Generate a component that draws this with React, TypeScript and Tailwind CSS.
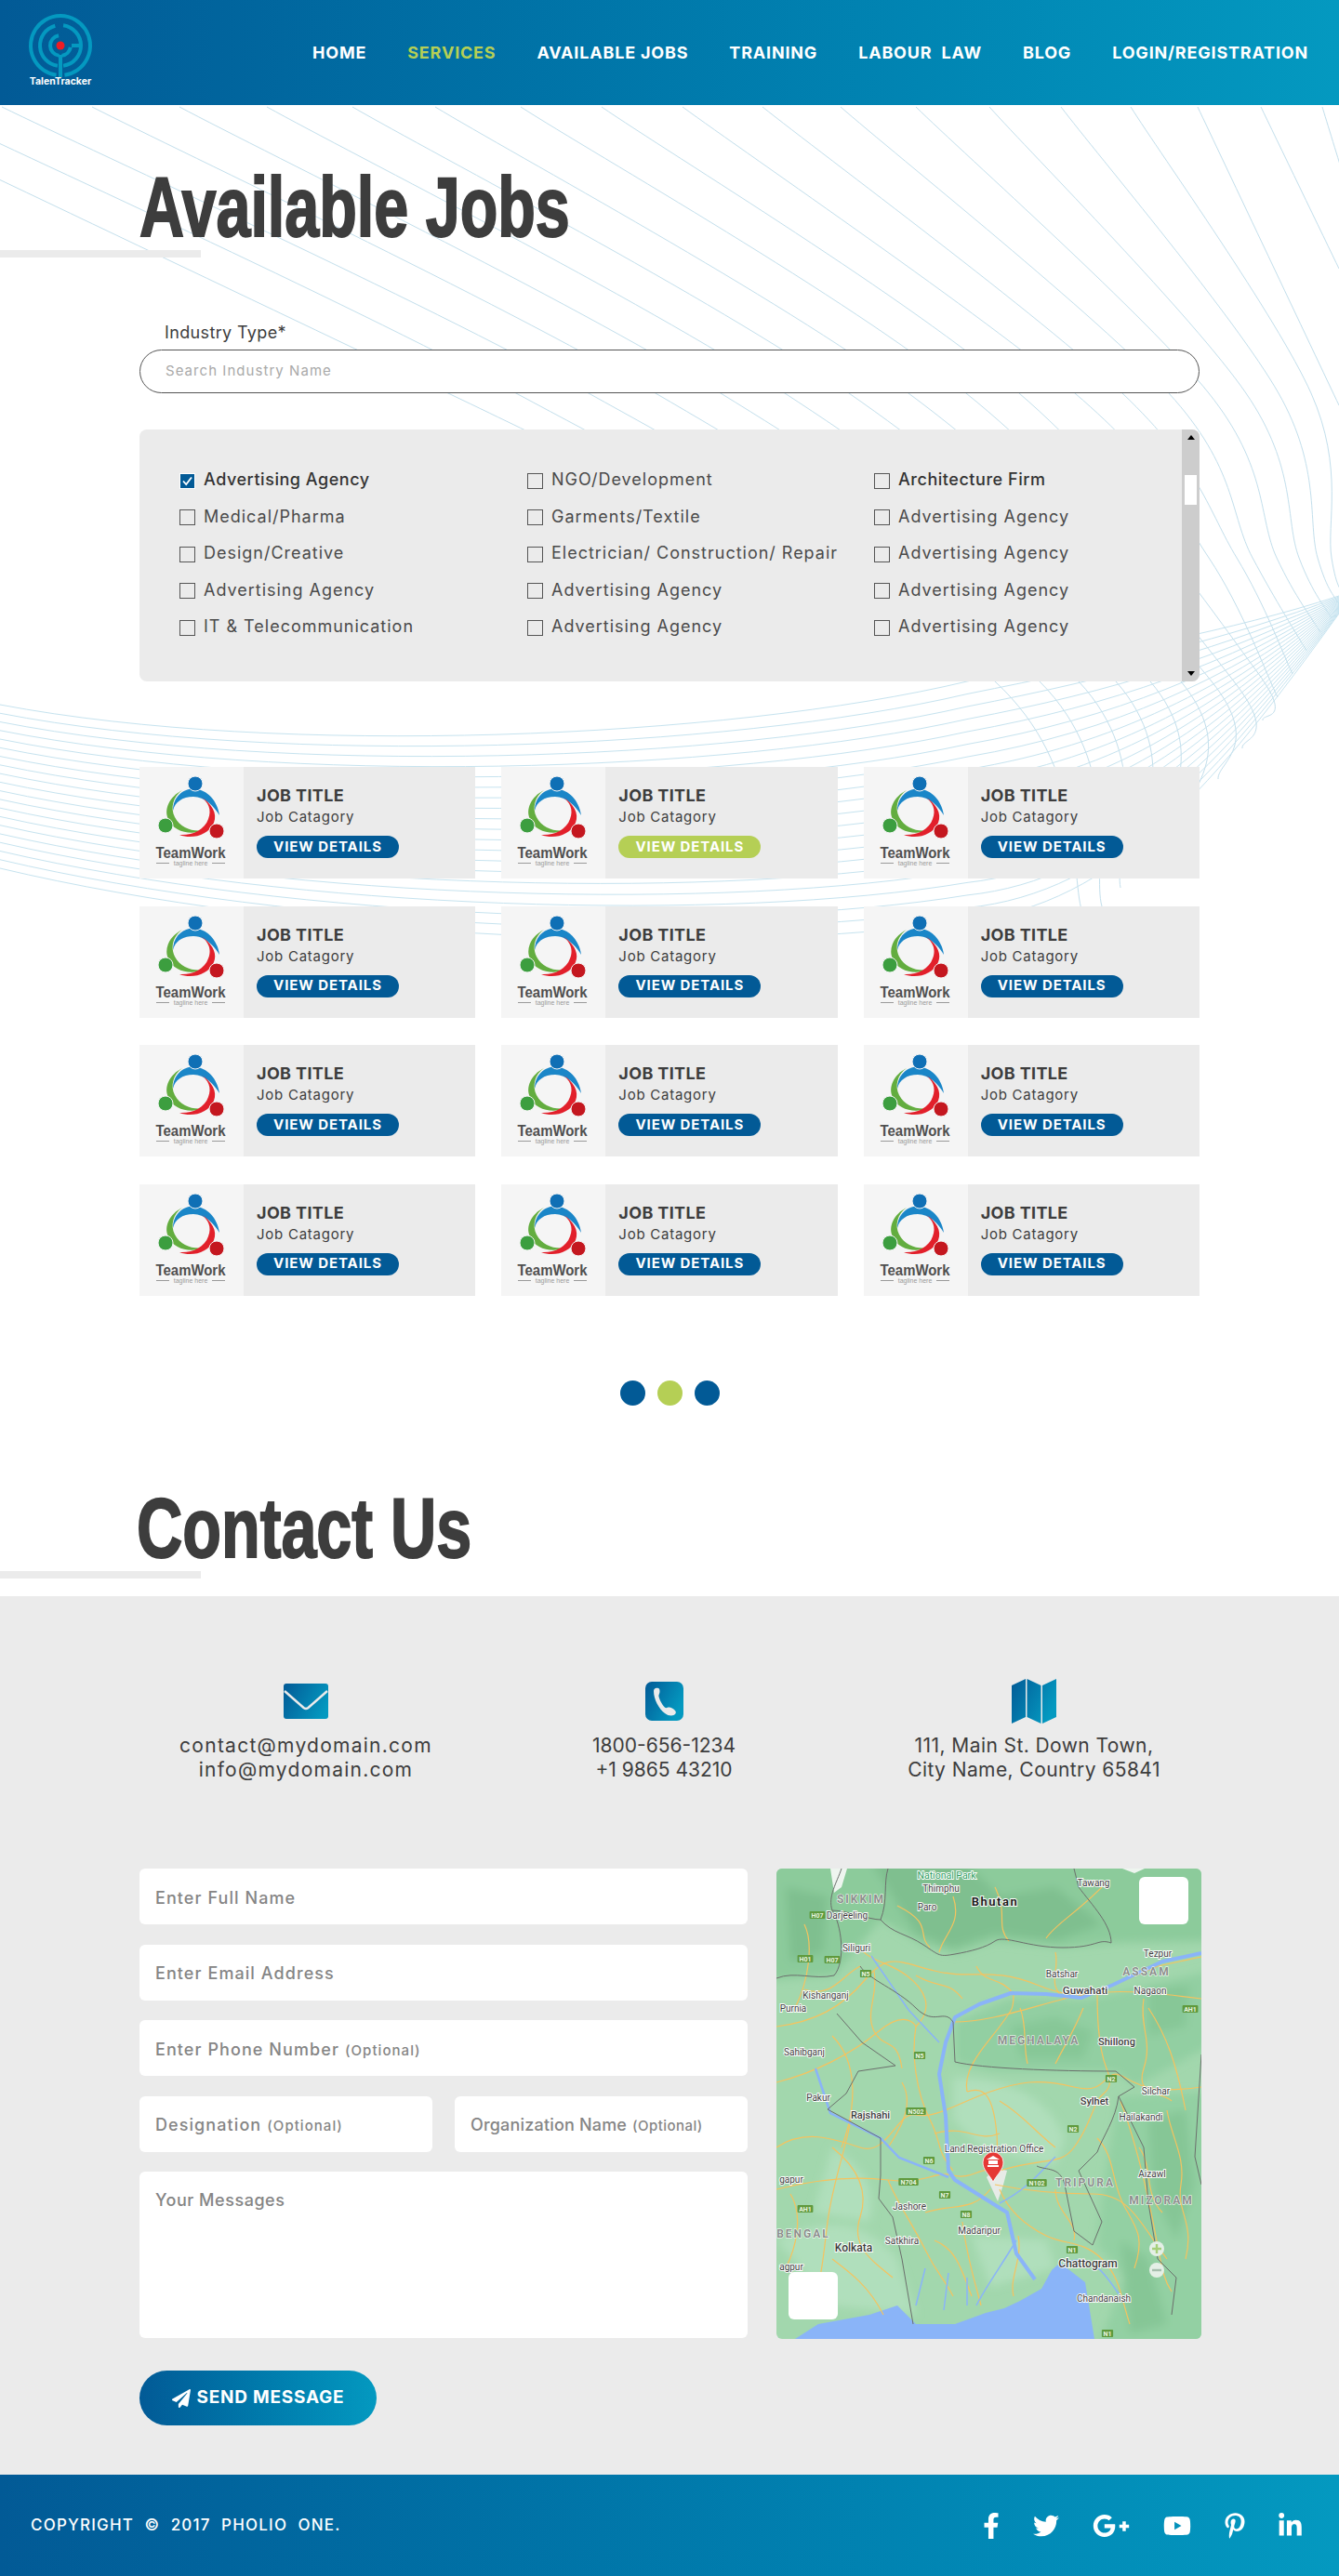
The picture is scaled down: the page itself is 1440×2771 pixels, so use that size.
import { FaFacebookF, FaTwitter, FaGooglePlusG, FaYoutube, FaPinterestP, FaLinkedinIn, FaPaperPlane } from "react-icons/fa";

const navLinks = ["HOME", "SERVICES", "AVAILABLE JOBS", "TRAINING", "LABOUR  LAW", "BLOG", "LOGIN/REGISTRATION"];

const industries = [
  ["Advertising Agency", "Medical/Pharma", "Design/Creative", "Advertising Agency", "IT & Telecommunication"],
  ["NGO/Development", "Garments/Textile", "Electrician/ Construction/ Repair", "Advertising Agency", "Advertising Agency"],
  ["Architecture Firm", "Advertising Agency", "Advertising Agency", "Advertising Agency", "Advertising Agency"],
];

const jobs = Array.from({ length: 12 }, (_, i) => i);

// background mesh, each line as waypoints read off the picture
const fanLines: number[][][] = [
  [[-165, 115], [482, 423], [640, 500]],
  [[-84, 115], [555, 423], [1070, 733], [1165, 985]],
  [[2, 115], [633, 423], [1118, 733], [1185, 975]],
  [[99, 115], [705, 423], [1160, 733], [1205, 955]],
  [[193, 115], [775, 423], [1200, 733], [1225, 930]],
  [[287, 115], [844, 423], [1237, 733], [1250, 900]],
  [[379, 115], [913, 423], [1270, 733], [1280, 870]],
  [[468, 115], [977, 423], [1303, 733], [1310, 838]],
  [[560, 115], [1039, 423], [1327, 733], [1336, 805]],
  [[647, 115], [1096, 423], [1350, 720], [1358, 775]],
  [[734, 115], [1156, 423], [1300, 600], [1374, 750]],
  [[820, 115], [1207, 423], [1330, 600], [1390, 725]],
  [[904, 115], [1257, 423], [1347, 600], [1405, 700]],
  [[985, 115], [1300, 423], [1373, 600], [1420, 680]],
  [[1064, 115], [1340, 423], [1397, 600], [1432, 665]],
  [[1141, 115], [1375, 423], [1417, 600], [1440, 650]],
  [[1216, 115], [1410, 423], [1432, 600], [1445, 640]],
  [[1288, 115], [1440, 436]],
  [[1356, 115], [1440, 289]],
  [[1422, 115], [1445, 190]],
];

function smoothPath(pts: number[][]) {
  let d = `M${pts[0][0]} ${pts[0][1]}`;
  for (let i = 0; i < pts.length - 1; i++) {
    const a = pts[Math.max(i - 1, 0)];
    const b = pts[i];
    const c = pts[i + 1];
    const e = pts[Math.min(i + 2, pts.length - 1)];
    d += ` C${b[0] + (c[0] - a[0]) / 6} ${b[1] + (c[1] - a[1]) / 6} ${c[0] - (e[0] - b[0]) / 6} ${c[1] - (e[1] - b[1]) / 6} ${c[0]} ${c[1]}`;
  }
  return d;
}

const waveTop = [758, 300, 815, 780, 795, 1040, 733, 1200, 700, 1320, 680, 1440, 641];
const waveBottom = [934, 320, 1010, 780, 1030, 1040, 990, 1200, 975, 1310, 840, 1440, 660];

function wavePath(t: number) {
  const v = waveTop.map((a, i) => a + (waveBottom[i] - a) * t);
  return `M0 ${v[0]} C${v[1]} ${v[2]} ${v[3]} ${v[4]} ${v[5]} ${v[6]} C${v[7]} ${v[8]} ${v[9]} ${v[10]} ${v[11]} ${v[12]}`;
}

function BackgroundMesh() {
  return (
    <svg className="absolute left-0 top-0 pointer-events-none" width="1440" height="1010" viewBox="0 113 1440 1010" fill="none">
      {fanLines.map((l, i) => (
        <path key={i} d={smoothPath(l)} stroke="#c3dfec" strokeWidth="1" />
      ))}
      {Array.from({ length: 20 }, (_, i) => (
        <path key={i} d={wavePath(i / 19)} stroke="#c6e3ef" strokeWidth="1" />
      ))}
    </svg>
  );
}

function arc(r: number, from: number, to: number) {
  const p = (a: number) => {
    const rad = ((a - 90) * Math.PI) / 180;
    return `${35 + r * Math.cos(rad)} ${35 + r * Math.sin(rad)}`;
  };
  return `M${p(from)} A${r} ${r} 0 ${to - from > 180 ? 1 : 0} 1 ${p(to)}`;
}

function Logo() {
  return (
    <div className="flex flex-col items-center w-[70px]">
      <svg width="70" height="70" viewBox="0 0 70 70" fill="none" stroke="#0499c0" strokeWidth="4">
        <path d={arc(32, 188, 532)} />
        <path d={arc(22, 8, 172)} />
        <path d={arc(22, 188, 345)} />
        <path d={arc(11, 100, 172)} />
        <path d={arc(11, 188, 350)} />
        <path d="M35 45 V69 M47 35 H56" />
        <circle cx="35" cy="35" r="4.5" fill="#ed1c24" stroke="none" />
      </svg>
      <span className="text-[10.5px] font-bold leading-none text-white -mt-[1px] whitespace-nowrap">TalenTracker</span>
    </div>
  );
}

function TeamLogo() {
  return (
    <div className="w-[112px] h-full bg-[#f5f5f5] shrink-0">
      <svg width="112" height="120" viewBox="0 0 112 120">
        <path d="M36 47 C36 30 50 22 60 24 C72 24 84 36 86 52 C80 42 70 32 58 32 C46 32 38 38 36 47 Z" fill="#1a86c8" />
        <path d="M46 25 C32 32 26 46 31 56 C36 70 56 74 69 68 C58 70 44 66 38 54 C33 44 36 32 46 25 Z" fill="#63ad3f" />
        <path d="M66 32 C78 40 84 50 80 60 C74 74 56 78 43 73 C56 74 70 68 74 56 C78 46 74 38 66 32 Z" fill="#e2202b" />
        <circle cx="60" cy="18" r="8" fill="#0f6fb5" stroke="#f5f5f5" strokeWidth="1" />
        <circle cx="28" cy="63" r="8" fill="#3c9e3f" stroke="#f5f5f5" strokeWidth="1" />
        <circle cx="83" cy="69" r="8" fill="#c4171f" stroke="#f5f5f5" strokeWidth="1" />
        <text x="55" y="98" textAnchor="middle" fontFamily="Liberation Sans" fontWeight="700" fontSize="16" fill="#4f4f4f" textLength="75" lengthAdjust="spacingAndGlyphs">TeamWork</text>
        <text x="55" y="106" textAnchor="middle" fontFamily="Liberation Sans" fontSize="7" fill="#9a9a9a">tagline here</text>
        <path d="M18 103.5 H32 M78 103.5 H92" stroke="#9a9a9a" strokeWidth="1" />
      </svg>
    </div>
  );
}

function JobCard({ active }: { active?: boolean }) {
  return (
    <div className="relative flex h-[120px] bg-[#ebebeb]">
      <TeamLogo />
      <div className="pl-[14px] pt-[20px]">
        <div className="text-[18px] leading-[22px] font-bold tracking-[0.02em] text-[#3d3d3d]">JOB TITLE</div>
        <div className="mt-[2px] text-[15px] leading-[20px] tracking-[0.05em] text-[#3d3d3d]">Job Catagory</div>
        <button className={`mt-[10px] flex items-center justify-center w-[153px] h-[24px] rounded-full text-white text-[15px] font-bold tracking-[0.06em] ${active ? "bg-[#b5cf55]" : "bg-[#025a96]"}`}>
          VIEW DETAILS
        </button>
      </div>
    </div>
  );
}

function Heading({ text, cls }: { text: string; cls: string }) {
  return (
    <>
      <div className="relative w-[1140px] mx-auto">
        <h1 className={`font-['Liberation_Sans',Arial,sans-serif] font-bold text-[91px] leading-[91px] text-[#3d3d3d] origin-left whitespace-nowrap [-webkit-text-stroke:2px_#3d3d3d] ${cls}`}>
          {text}
        </h1>
      </div>
      <div className="relative mt-[1px] w-[216px] h-2 bg-[#ebebeb]" />
    </>
  );
}

function Checkbox({ checked }: { checked?: boolean }) {
  return (
    <span className={`mt-[3px] flex items-center justify-center w-[17px] h-[17px] shrink-0 border ${checked ? "bg-[#025a96] border-white" : "border-[#555]"}`}>
      {checked && (
        <svg width="11" height="11" viewBox="0 0 11 11" fill="none" stroke="#fff" strokeWidth="1.8">
          <path d="M1 5.5 L4.2 9 L10 1.5" />
        </svg>
      )}
    </span>
  );
}

function IndustryPanel() {
  return (
    <div className="mt-[39px] flex h-[271px] rounded-lg overflow-hidden bg-[#ebebeb] relative">
      <div className="flex-1 grid grid-cols-[374px_373px_1fr] pl-[43px] pt-[34px]">
        {industries.map((col, c) => (
          <div key={c}>
            {col.map((name, r) => {
              const strong = r === 0 && c !== 1;
              return (
                <div key={r} className="flex items-center gap-[9px] h-[39.5px] whitespace-nowrap">
                  <Checkbox checked={c === 0 && r === 0} />
                  <span className={`text-[18px] ${strong ? "tracking-[0.03em] font-medium text-[#333]" : "tracking-[0.055em] text-[#4a4a4a]"}`}>{name}</span>
                </div>
              );
            })}
          </div>
        ))}
      </div>
      <div className="w-[19px] bg-[#cdcdcd] flex flex-col items-center pt-[6px] pb-[6px]">
        <span className="w-0 h-0 border-x-[4px] border-x-transparent border-b-[5px] border-b-black" />
        <span className="mt-[38px] w-[13px] h-[32px] bg-white" />
        <span className="mt-auto w-0 h-0 border-x-[4px] border-x-transparent border-t-[5px] border-t-black" />
      </div>
    </div>
  );
}

function IconGradient({ id, size }: { id: string; size: number }) {
  return (
    <defs>
      <linearGradient id={id} gradientUnits="userSpaceOnUse" x1="0" y1="0" x2={size} y2={size * 0.5}>
        <stop offset="0" stopColor="#025a96" />
        <stop offset="1" stopColor="#0499c0" />
      </linearGradient>
    </defs>
  );
}

function MailIcon() {
  return (
    <svg width="48" height="38" viewBox="0 0 48 38">
      <IconGradient id="mailGrad" size={48} />
      <rect width="48" height="38" rx="3" fill="url(#mailGrad)" />
      <path d="M1 8 L21.5 26 Q24 28 26.5 26 L47 8" fill="none" stroke="#ebebeb" strokeWidth="2.4" />
    </svg>
  );
}

function PhoneIcon() {
  return (
    <svg width="41" height="42" viewBox="0 0 41 42">
      <IconGradient id="phoneGrad" size={41} />
      <rect width="41" height="42" rx="7" fill="url(#phoneGrad)" />
      <path d="M9 10 C9 7.5 11 6 14 7 C15.5 7.5 15.5 9 15.5 11 C15.5 13 14 14 14.5 16 C15.5 20 18.5 25.5 21.5 28 C23 28.5 24 27.5 25.5 27.5 C27.5 27.5 30 29 32 31 C33.5 32.5 33 35 30.5 36 C28 37 24 36.5 21 34 C14.5 29 9 19 9 10 Z" fill="#ebebeb" />
    </svg>
  );
}

function MapIcon() {
  return (
    <svg width="48" height="48" viewBox="0 0 48 48">
      <IconGradient id="foldGrad" size={48} />
      <path d="M0 7 L15 0 V41 L0 48 Z M16.5 0 L31.5 7 V48 L16.5 41 Z M33 7 L48 0 V41 L33 48 Z" fill="url(#foldGrad)" />
    </svg>
  );
}

function ContactInfo() {
  const cols = [
    { icon: <MailIcon />, lines: ["contact@mydomain.com", "info@mydomain.com"], cls: "", text: "tracking-[0.06em]" },
    { icon: <PhoneIcon />, lines: ["1800-656-1234", "+1 9865 43210"], cls: "", text: "" },
    { icon: <MapIcon />, lines: ["111, Main St. Down Town,", "City Name, Country 65841"], cls: "pl-[14px]", text: "tracking-[0.02em]" },
  ];
  return (
    <div className="grid grid-cols-[358px_412px_370px]">
      {cols.map((c, i) => (
        <div key={i} className={`flex flex-col items-center ${c.cls}`}>
          <div className="h-[48px] flex items-center justify-center">{c.icon}</div>
          <div className={`mt-[11px] text-[21px] leading-[26px] text-[#3d3d3d] text-center whitespace-nowrap ${c.text}`}>
            {c.lines.map((l) => (
              <div key={l}>{l}</div>
            ))}
          </div>
        </div>
      ))}
    </div>
  );
}

function Field({ label, optional }: { label: string; optional?: boolean }) {
  return (
    <div className="flex items-center h-[60px] px-[17px] bg-white rounded-md whitespace-nowrap text-[#858585] text-[18px] font-medium tracking-[0.06em]">
      <span className="pt-[2px]">
        {label}
        {optional && <span className="ml-[6px] text-[15px] tracking-[0.07em]">(Optional)</span>}
      </span>
    </div>
  );
}

function ContactForm() {
  return (
    <div className="w-[654px] shrink-0">
      <div className="flex flex-col gap-[21.5px]">
        <Field label="Enter Full Name" />
        <Field label="Enter Email Address" />
        <Field label="Enter Phone Number" optional />
        <div className="grid grid-cols-2 gap-[24px]">
          <Field label="Designation" optional />
          <div className="[&>div]:tracking-[0.01em] [&_span_span]:tracking-[0.03em]">
            <Field label="Organization Name" optional />
          </div>
        </div>
        <div className="h-[179px] px-[17px] pt-[19px] bg-white rounded-md text-[#858585] text-[18px] font-medium leading-[24px] tracking-[0.03em]">Your Messages</div>
      </div>
      <button className="mt-[35px] flex items-center justify-center gap-[7px] w-[255px] h-[59px] rounded-full bg-linear-to-r from-[#025a96] to-[#0499c0] text-white text-[19px] font-bold tracking-[0.04em]">
        <FaPaperPlane className="w-[20px] h-[20px]" />
        SEND MESSAGE
      </button>
    </div>
  );
}

const cityLabels: [string, number, number, number?][] = [
  ["Thimphu", 177, 25], ["Paro", 162, 45], ["Darjeeling", 76, 54], ["Tawang", 341, 19], ["Siliguri", 86, 89],
  ["Tezpur", 410, 95], ["Batshar", 307, 117], ["Guwahati", 332, 135, 11.5], ["Nagaon", 402, 135], ["Kishanganj", 53, 140],
  ["Purnia", 18, 154], ["Shillong", 366, 190, 11], ["Sahibganj", 30, 201], ["Silchar", 408, 243], ["Sylhet", 342, 254, 11],
  ["Hailakandi", 392, 271], ["Pakur", 45, 250], ["Rajshahi", 101, 269, 11], ["Land Registration Office", 234, 305],
  ["Aizawl", 404, 332], ["Jashore", 143, 367], ["Madaripur", 218, 393], ["Satkhira", 135, 404], ["Kolkata", 83, 412, 12],
  ["Chattogram", 335, 429, 12], ["Chandanaish", 352, 466], ["gapur", 16, 338], ["agpur", 16, 432],
];

const stateLabels: [string, number, number][] = [
  ["SIKKIM", 91, 37], ["ASSAM", 398, 115], ["MEGHALAYA", 282, 189], ["TRIPURA", 332, 342], ["MIZORAM", 414, 361], ["BENGAL", 29, 397],
];

const shields: [string, number, number][] = [
  ["H07", 44, 50], ["H01", 31, 97], ["H07", 60, 98], ["N5", 96, 113], ["N5", 154, 201], ["AH1", 445, 151], ["N2", 360, 226],
  ["N502", 150, 261], ["N2", 319, 280], ["N6", 164, 314], ["N704", 142, 337], ["N102", 280, 338], ["N7", 181, 351],
  ["AH1", 31, 366], ["N8", 204, 372], ["N1", 318, 410], ["N1", 356, 500],
];

const roads = [
  "M0 170 C40 165 70 150 95 120 S130 100 170 110 S230 105 280 125 S340 135 410 105 L457 95",
  "M90 85 C100 100 120 100 140 115 S170 150 150 170 C145 200 150 240 165 270 S170 300 190 325",
  "M0 230 C40 220 80 200 110 175 S150 170 150 170",
  "M0 300 C30 280 60 290 90 300 S130 260 150 265 S200 250 230 240 S280 225 320 235 S350 210 375 225 S420 240 457 235",
  "M190 165 C230 165 270 150 310 140 S380 130 457 140",
  "M205 240 C200 215 225 190 240 170 S255 150 255 135",
  "M270 210 C265 190 270 170 262 150",
  "M345 130 C345 150 345 190 355 215 S350 240 345 250 S335 280 320 300 S290 310 240 325",
  "M0 345 C40 335 80 330 120 335 S170 325 190 330 S220 320 235 325",
  "M80 270 C75 300 60 340 55 380 S50 430 40 470",
  "M120 335 C130 360 145 380 160 410 S180 440 190 460",
  "M235 340 C260 345 300 350 340 350 S390 380 420 420",
  "M240 345 C250 370 270 385 290 395 S330 400 350 420 S370 460 380 490",
  "M370 250 C385 290 395 330 405 380 S415 440 425 455",
  "M205 240 C220 235 230 240 235 270 S235 300 240 320",
  "M160 370 C190 360 210 370 230 345",
  "M200 380 C205 420 215 450 220 470",
  "M350 20 C320 50 300 60 290 75 M235 20 C250 50 235 60 250 78 M130 40 C170 60 150 70 165 85 M190 30 C200 60 180 70 175 90",
  "M30 60 C40 80 35 120 20 150 M60 180 C90 210 85 260 70 300 M400 150 C420 180 430 210 440 260",
  "M105 110 C110 135 95 155 105 175 S130 180 135 215 M30 130 C60 140 70 115 90 105",
  "M215 105 C225 125 240 115 255 135 M150 115 C175 130 185 120 200 140 M300 90 C305 110 290 125 310 140",
  "M395 140 C390 170 405 185 395 215 S415 240 425 250 M330 150 C320 175 310 190 300 210",
  "M60 300 C85 320 100 345 90 375 S100 420 125 440 M15 350 C30 375 20 410 10 430",
  "M135 230 C150 255 130 285 120 300 M170 285 C205 275 215 295 240 285 M240 250 C265 265 275 280 300 300",
  "M300 345 C300 370 325 380 320 400 M345 290 C365 310 360 340 375 365 S395 400 385 430",
  "M420 260 C425 290 440 310 435 340 S450 380 440 420 M390 300 C405 320 395 350 415 370",
  "M260 395 C265 420 250 440 255 460 M170 400 C195 410 200 435 210 460 M60 420 C80 435 100 450 115 480",
];

function MapView() {
  return (
    <div className="relative w-[457px] h-[506px] shrink-0 rounded-md overflow-hidden">
      <svg className="block" width="457" height="506" viewBox="0 0 457 506" fontFamily="Roboto, sans-serif">
        <defs>
          <filter id="terrainBlur" x="-5%" y="-5%" width="110%" height="110%">
            <feGaussianBlur stdDeviation="5" />
          </filter>
        </defs>
        <rect width="457" height="506" fill="#a2d7ad" />
        <g filter="url(#terrainBlur)">
          <path d="M-10 -10 H467 V78 L360 80 L308 85 L235 78 L192 92 L158 82 L112 55 L62 115 L-10 120 Z" fill="#8ccb9b" />
          <path d="M100 -10 L200 -10 L240 30 L300 20 L350 60 L300 78 L235 70 L190 85 L150 70 Z M10 20 L55 30 L50 90 L15 100 Z" fill="#7fbf8f" />
          <path d="M192 165 L252 140 L330 142 L467 110 V190 L385 235 L365 218 L232 218 L192 208 Z" fill="#92cfa2" />
          <path d="M250 170 L300 160 L340 175 L330 205 L265 205 Z M400 130 L445 125 L440 170 L400 180 Z" fill="#87c797" />
          <path d="M368 245 L467 240 V516 L345 516 L375 440 L345 405 L350 350 Z" fill="#93d0a3" />
          <path d="M400 270 L440 260 L450 340 L430 400 L405 350 Z M370 400 L400 420 L420 490 L380 500 Z" fill="#86c696" />
          <path d="M0 400 C40 380 90 370 130 420 L150 480 L60 470 Z" fill="#b0dfbc" />
          <path d="M190 225 C240 225 290 240 310 290 L300 320 L220 300 L190 270 Z M60 300 C90 320 110 340 100 380 L40 370 Z M210 395 L290 400 L300 430 L230 450 Z" fill="#b0dfbc" />
        </g>
        <path d="M58 0 L76 0 L70 20 L62 26 Z M372 0 H396 L385 5 Z" fill="#eef5ef" />
        <path d="M20 506 L45 490 L100 480 L130 470 L150 490 L192 490 L225 478 L245 473 L262 465 L285 452 L296 432 L305 424 L332 445 L342 506 Z" fill="#8ab4f8" />
        <path d="M226 332 L238 358 L244 340 L248 325 L236 322 Z" fill="#e7ebe7" />
        <g fill="none" stroke="#f5c35f" strokeWidth="1.2">
          {roads.map((d, i) => (
            <path key={i} d={d} />
          ))}
        </g>
        <g fill="none" stroke="#8ab4f8">
          <path strokeWidth="4" strokeLinejoin="round" d="M457 91 L415 100 L362 125 L328 139 L290 135 L252 134 L218 146 L192 160 L182 187 L175 221 L182 266 L185 325 L192 335 L248 370 L258 414 L278 442" />
          <path strokeWidth="2.5" d="M42 215 L58 263 L112 290 L132 311 L185 332" />
          <path strokeWidth="1.5" d="M102 94 L142 152 L175 187" />
          <path strokeWidth="1.5" d="M258 400 C240 430 225 450 215 470 M240 360 C270 345 285 325 300 310 M310 425 C340 410 355 440 370 460 M150 470 L160 430 M180 475 L185 435 M205 470 L205 440" />
        </g>
        <g fill="none" stroke="#6b6f6c" strokeWidth="1">
          <path d="M112 55 C125 70 140 70 158 82 S175 95 192 92 S225 85 235 78 S270 85 308 85 S345 75 360 80 C360 60 340 40 325 20 L320 0" />
          <path d="M62 115 C75 100 70 60 60 45 M0 118 C20 110 40 120 62 115" />
          <path d="M70 0 C65 15 55 30 60 45 C75 45 100 55 112 55 C120 35 115 15 120 0" />
          <path d="M90 105 C100 120 130 130 150 150 S180 150 190 165 L192 208 C220 215 300 218 365 218 L385 235 L368 245 C365 270 350 290 345 305 L325 325 L350 380 L340 405 L320 390 L310 340 C305 320 290 325 280 320" />
          <path d="M65 156 L92 187 L128 212 L88 218 L75 242 L55 259 L112 290 L112 330 L110 355 L125 375 L135 420 L147 490" />
          <path d="M368 245 L395 300 L400 360 L410 420 L430 440 L425 480 M457 200 L450 310 L457 340" />
        </g>
        {shields.map(([t, x, y], i) => {
          const w = t.length * 4.6 + 3;
          return (
            <g key={i}>
              <rect x={x - w / 2} y={y - 4} width={w} height={8} rx="1" fill="#5f9a3d" />
              <text x={x} y={y + 2.6} textAnchor="middle" fontSize="7" fontWeight="700" fill="#e8f5e0">{t}</text>
            </g>
          );
        })}
        <g textAnchor="middle" stroke="#fff" strokeWidth="1.8" paintOrder="stroke" fill="#3d3d3d">
          {cityLabels.map(([t, x, y, s], i) => (
            <text key={i} x={x} y={y} fontSize={s ?? 10} fontWeight={s ? 500 : 400}>{t}</text>
          ))}
          <text x="183" y="11" fontSize="10.5" fill="#2f9e63">National Park</text>
          <text x="235" y="40" fontSize="13" fontWeight="700" letterSpacing="1.5" fill="#1f1f1f">Bhutan</text>
        </g>
        <g textAnchor="middle" fontSize="12" fontWeight="700" letterSpacing="2" fill="#8c8f8d" stroke="#fff" strokeWidth="1" paintOrder="stroke">
          {stateLabels.map(([t, x, y], i) => (
            <text key={i} x={x} y={y}>{t}</text>
          ))}
        </g>
        <path d="M233 337 C228 328 222 324 222 316 A11 11 0 0 1 244 316 C244 324 238 328 233 337 Z" fill="#e53935" stroke="#fff" strokeWidth="0.8" />
        <path d="M227 321 H239 V319 H227 Z M228 318 V314 H238 V318 Z M226 313 L233 309 L240 313 Z" fill="#fff" />
        <circle cx="409" cy="409" r="8" fill="#e4efe6" />
        <circle cx="409" cy="432" r="8" fill="#e4efe6" />
        <path d="M404 409 H414 M409 404 V414" stroke="#a5cf7a" strokeWidth="2.4" />
        <path d="M404 432 H414" stroke="#a7bfae" strokeWidth="2.4" />
      </svg>
      <div className="absolute left-[390px] top-[9px] w-[53px] h-[51px] bg-white rounded-md" />
      <div className="absolute left-[13px] top-[434px] w-[53px] h-[51px] bg-white rounded-md" />
    </div>
  );
}

export default function App() {
  return (
    <div className="w-[1440px] bg-white font-[Inter,'Liberation_Sans',sans-serif] text-[#3d3d3d]">
      <header className="flex items-center justify-between h-[113px] pl-[30px] pr-[33px] bg-linear-to-r from-[#025a96] to-[#0499c0]">
        <div className="-mt-[6px]">
          <Logo />
        </div>
        <nav className="flex gap-[44px] text-[18px] font-bold leading-none tracking-[0.045em] text-white whitespace-pre">
          {navLinks.map((l) => (
            <a key={l} className={l === "SERVICES" ? "text-[#b5cf55]" : ""}>{l}</a>
          ))}
        </nav>
      </header>

      <main className="relative pt-[64px]">
        <BackgroundMesh />
        <Heading text="Available Jobs" cls="scale-x-[0.73]" />

        <section className="relative w-[1140px] mx-auto">
          <label className="block mt-[69px] pl-[27px] text-[18px] leading-6 tracking-[0.02em] text-[#3d3d3d]">Industry Type*</label>
          <div className="mt-[6px] flex items-center h-[47px] pl-[27px] border border-[#555] rounded-full bg-white text-[15px] tracking-[0.07em] text-[#a9a9a9]">
            Search Industry Name
          </div>
          <IndustryPanel />

          <div className="mt-[92px] grid grid-cols-3 gap-x-[28px] gap-y-[29.5px]">
            {jobs.map((j) => (
              <JobCard key={j} active={j === 1} />
            ))}
          </div>

          <div className="mt-[91px] flex justify-center gap-[13px]">
            <span className="w-[27px] h-[27px] rounded-full bg-[#025a96]" />
            <span className="w-[27px] h-[27px] rounded-full bg-[#b5cf55]" />
            <span className="w-[27px] h-[27px] rounded-full bg-[#025a96]" />
          </div>
        </section>

        <div className="mt-[86px]">
          <Heading text="Contact Us" cls="scale-x-[0.75] -translate-x-[3px]" />
        </div>

        <section className="mt-[19.5px] bg-[#ebebeb] pt-[89px] pb-[52.5px]">
          <div className="w-[1140px] mx-auto">
            <ContactInfo />
            <div className="mt-[93px] flex gap-[31px]">
              <ContactForm />
              <MapView />
            </div>
          </div>
        </section>
      </main>

      <footer className="flex items-center justify-between h-[110px] pl-[33px] pr-[40px] bg-linear-to-r from-[#025a96] to-[#0499c0] text-white">
        <span className="text-[17px] font-medium tracking-[0.07em] whitespace-pre">COPYRIGHT  ©  2017  PHOLIO  ONE.</span>
        <div className="flex items-center gap-[36px]">
          <FaFacebookF className="w-[18px] h-7" />
          <FaTwitter className="w-[28px] h-7" />
          <FaGooglePlusG className="w-[40px] h-8" />
          <FaYoutube className="w-[30px] h-7" />
          <FaPinterestP className="w-[22px] h-7" />
          <FaLinkedinIn className="w-[25px] h-7" />
        </div>
      </footer>
    </div>
  );
}
